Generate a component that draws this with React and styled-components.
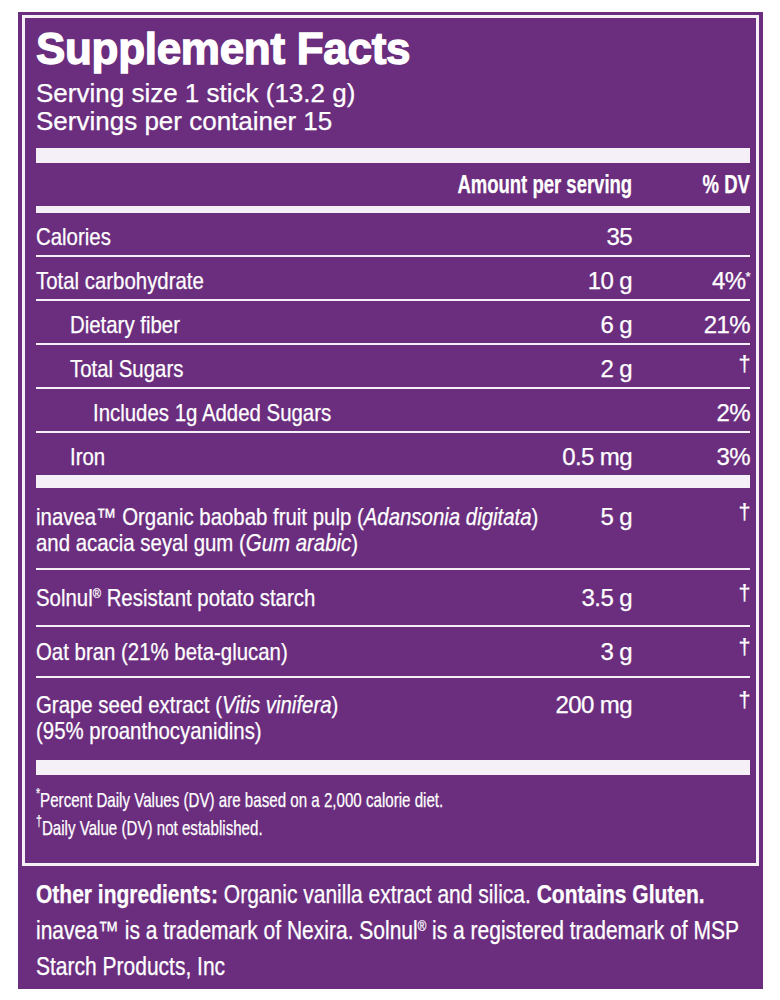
import React from "react";
import styled, { createGlobalStyle } from "styled-components";

const purple = "#6b2e7e";
const rule = "#f5f0f7";

const GlobalStyle = createGlobalStyle`
  html, body {
    margin: 0;
    padding: 0;
    background: #ffffff;
  }
  body {
    font-family: "Liberation Sans", Arial, sans-serif;
    color: #ffffff;
    -webkit-text-stroke: 0.25px #ffffff;
  }
`;

const Page = styled.div`
  padding: 12px 0 13px 18px;
`;

const Panel = styled.section`
  width: 745px;
  box-sizing: border-box;
  background: ${purple};
  padding: 3px 4px 5px 4px;
  overflow: hidden;
`;

const FactsBox = styled.div`
  border: 3px solid ${rule};
  padding: 6px 6px 0 11px;
`;

const Title = styled.h1`
  margin: 0;
  padding-top: 1px;
  font-size: 44px;
  line-height: 48px;
  font-weight: 700;
  letter-spacing: -0.3px;
  -webkit-text-stroke: 1.3px #ffffff;
`;

const Serving = styled.div`
  margin-top: 6px;
  font-size: 26px;
  line-height: 28px;
`;

const Bar = styled.div`
  height: ${(p) => p.$h}px;
  margin-top: ${(p) => p.$mt || 0}px;
  background: ${rule};
`;

// the label face is a condensed grotesk; squeeze Liberation Sans to its width
const Squeeze = styled.span`
  display: inline-block;
  white-space: nowrap;
  transform: scaleX(${(p) => p.$x || 0.85});
  transform-origin: ${(p) => (p.$right ? "right" : "left")} center;
`;

const HeaderRow = styled.div`
  height: 43px;
  display: grid;
  grid-template-columns: minmax(0, 1fr) 240px 118px;
  align-items: center;
  font-weight: 700;
  font-size: 25px;
  text-align: right;
`;

const Row = styled.div`
  display: grid;
  grid-template-columns: minmax(0, 1fr) 90px 118px;
  align-items: start;
  padding: ${(p) => p.$pad};
  line-height: ${(p) => (p.$tall ? 26 : 24)}px;
  font-size: 24px;
  border-bottom: ${(p) => (p.$last ? "none" : `2px solid ${rule}`)};
`;

const Name = styled.div`
  padding-left: ${(p) => p.$indent || 0}px;
  white-space: nowrap;
`;

const Amount = styled.div`
  text-align: right;
  letter-spacing: -0.6px;
`;

const Dv = styled.div`
  text-align: right;
  letter-spacing: -0.6px;
`;

const Sup = styled.sup`
  font-size: ${(p) => p.$size || 0.55}em;
  vertical-align: baseline;
  position: relative;
  top: ${(p) => p.$top || -0.6}em;
  line-height: 0;
`;

const Notes = styled.div`
  padding: 11px 0 21px;
  font-size: 21px;
  line-height: 28px;
`;

const Other = styled.div`
  padding: 10px 0 0 14px;
  font-size: 25px;
  line-height: 36px;

  & b {
    font-weight: 700;
  }
`;

const dagger = (
  <Sup $size={0.9} $top={-0.3}>
    †
  </Sup>
);

const nutrients = [
  { name: "Calories", amount: "35", dv: "" },
  { name: "Total carbohydrate", amount: "10 g", dv: <>4%<Sup>*</Sup></> },
  { name: "Dietary fiber", amount: "6 g", dv: "21%", indent: 34 },
  { name: "Total Sugars", amount: "2 g", dv: dagger, indent: 34 },
  { name: "Includes 1g Added Sugars", amount: "", dv: "2%", indent: 57 },
  { name: "Iron", amount: "0.5 mg", dv: "3%", indent: 34 },
];

const ingredients = [
  {
    name: (
      <>
        inavea™ Organic baobab fruit pulp (<i>Adansonia digitata</i>)
        <br />
        and acacia seyal gum (<i>Gum arabic</i>)
      </>
    ),
    amount: "5 g",
    pad: "16px 0 12px",
  },
  {
    name: (
      <>
        Solnul<Sup>®</Sup> Resistant potato starch
      </>
    ),
    amount: "3.5 g",
    pad: "15px 0 14px",
  },
  { name: "Oat bran (21% beta-glucan)", amount: "3 g", pad: "12px 0 11px" },
  {
    name: (
      <>
        Grape seed extract (<i>Vitis vinifera</i>)
        <br />
        (95% proanthocyanidins)
      </>
    ),
    amount: "200 mg",
    pad: "14px 0 16px",
  },
];

const App = () => {
  return (
    <>
      <GlobalStyle />
      <Page>
        <Panel>
          <FactsBox>
            <Title>Supplement Facts</Title>
            <Serving>
              Serving size 1 stick (13.2 g)
              <br />
              Servings per container 15
            </Serving>
            <Bar $h={15} $mt={13} />
            <HeaderRow>
              <span />
              <span>
                <Squeeze $x={0.74} $right>Amount per serving</Squeeze>
              </span>
              <span>
                <Squeeze $x={0.74} $right>% DV</Squeeze>
              </span>
            </HeaderRow>
            <Bar $h={7} />
            {nutrients.map((n, i) => (
              <Row key={i} $pad="12px 0 6px" $last={i === nutrients.length - 1}>
                <Name $indent={n.indent}>
                  <Squeeze>{n.name}</Squeeze>
                </Name>
                <Amount>{n.amount}</Amount>
                <Dv>{n.dv}</Dv>
              </Row>
            ))}
            <Bar $h={13} />
            {ingredients.map((n, i) => (
              <Row key={i} $tall $pad={n.pad} $last={i === ingredients.length - 1}>
                <Name>
                  <Squeeze>{n.name}</Squeeze>
                </Name>
                <Amount>{n.amount}</Amount>
                <Dv>{dagger}</Dv>
              </Row>
            ))}
            <Bar $h={15} />
            <Notes>
              <Squeeze $x={0.72}>
                <Sup $size={0.7}>*</Sup>Percent Daily Values (DV) are based on a 2,000 calorie diet.
                <br />
                <Sup $size={0.7}>†</Sup>Daily Value (DV) not established.
              </Squeeze>
            </Notes>
          </FactsBox>
          <Other>
            <Squeeze $x={0.84}>
              <b>Other ingredients:</b> Organic vanilla extract and silica. <b>Contains Gluten.</b>
              <br />
              inavea™ is a trademark of Nexira. Solnul<Sup>®</Sup> is a registered trademark of MSP
              <br />
              Starch Products, Inc
            </Squeeze>
          </Other>
        </Panel>
      </Page>
    </>
  );
};

export default App;
